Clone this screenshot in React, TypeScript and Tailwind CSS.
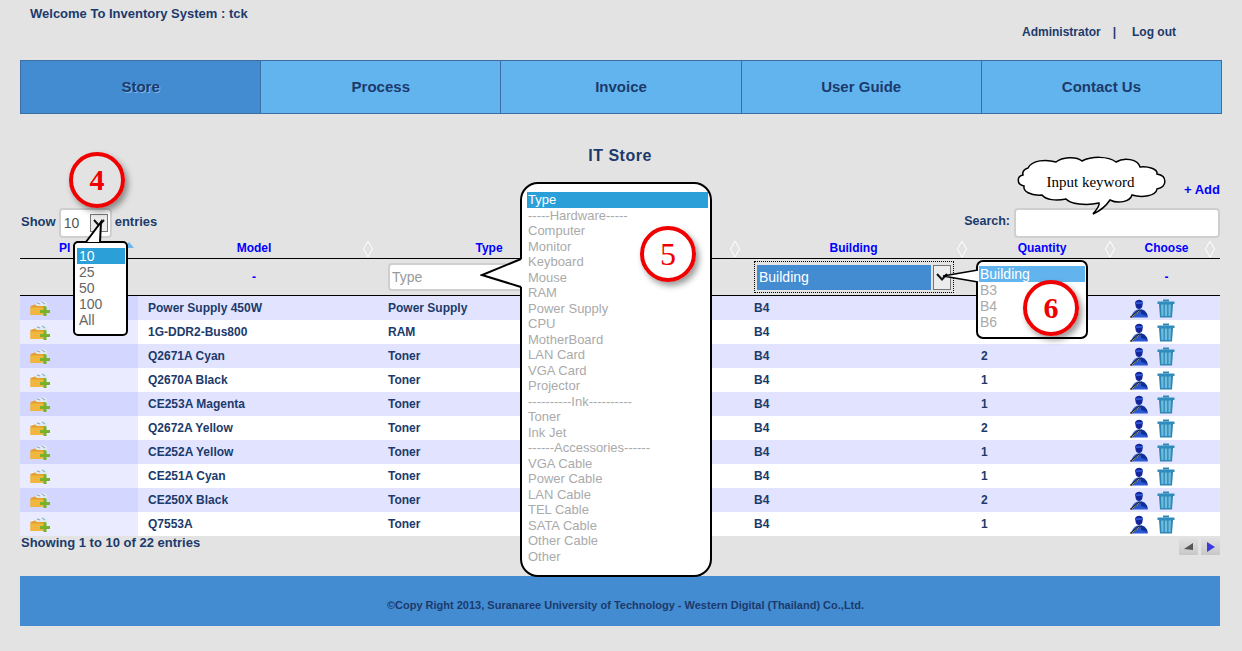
import React from "react"

const navItems = ["Store", "Process", "Invoice", "User Guide", "Contact Us"]

const rows = [
	["Power Supply 450W", "Power Supply", ""],
	["1G-DDR2-Bus800", "RAM", ""],
	["Q2671A Cyan", "Toner", "2"],
	["Q2670A Black", "Toner", "1"],
	["CE253A Magenta", "Toner", "1"],
	["Q2672A Yellow", "Toner", "2"],
	["CE252A Yellow", "Toner", "1"],
	["CE251A Cyan", "Toner", "1"],
	["CE250X Black", "Toner", "2"],
	["Q7553A", "Toner", "1"],
]

const typeOptions = [
	"Type", "-----Hardware-----", "Computer", "Monitor", "Keyboard", "Mouse", "RAM", "Power Supply", "CPU", "MotherBoard", "LAN Card", "VGA Card", "Projector",
	"----------Ink----------", "Toner", "Ink Jet", "------Accessories------", "VGA Cable", "Power Cable", "LAN Cable", "TEL Cable", "SATA Cable", "Other Cable", "Other",
]

// sort marker in the header cells
const SortBoth = ({ className }: { className: string }) => (
	<svg viewBox="0 0 12 18" className={`absolute top-[-1px] h-[18px] w-3 ${className}`} fill="none" stroke="#ffffff" strokeWidth="1">
		<path d="M6 1 L10.5 9 L6 17 L1.5 9 Z" />
	</svg>
)

const FolderPlus = () => (
	<svg viewBox="0 0 20 16" className="h-4 w-5">
		<path d="M5 5 L8 1.5 L11 2.5 L14 0.5 L17 3 L17.5 7 L5 7 Z" fill="#dfe9f2" />
		<path d="M7 3 L10 4 M12 2 L15 4" stroke="#6f8fb0" strokeWidth="0.8" />
		<path d="M0.5 6 L5 4.5 L7 6 L16 6 L16 15 L0.5 15 Z" fill="#e2a02e" />
		<path d="M0.5 7.5 L16 7.5 L16 15 L0.5 15 Z" fill="#f0b63f" />
		<path d="M13.5 6.5 H16.5 V10 H20 V13 H16.5 V16 H13.5 V13 H10 V10 H13.5 Z" fill="#76b32a" />
	</svg>
)

const UserPen = () => (
	<svg viewBox="0 0 18 19" className="h-[19px] w-[18px]">
		<path d="M5 4 C5.5 0 12.5 -0.5 13 3.5 L12.5 6 C12.5 8.5 11 10 9 10 C7 10 5.5 8.5 5.5 6 Z" fill="#12289a" />
		<path d="M5.5 3.5 L13 3 L13 4.5 L5.5 5 Z" fill="#3a5fe0" />
		<path d="M1.5 18.5 C2 14 4.5 11.5 7.5 10.5 L11.5 10.5 C15 11.5 17.5 14 18 18.5 Z" fill="#2a5ad6" />
		<path d="M10.5 10.5 L12 10.5 C15 11.5 17 14 17.5 17 L11 15 Z" fill="#12308f" />
		<path d="M0.5 18.5 L10 11" stroke="#161616" strokeWidth="1.8" />
		<path d="M1.5 18.2 L9.5 11.8" stroke="#d9d9c8" strokeWidth="0.7" />
	</svg>
)

const TrashIcon = () => (
	<svg viewBox="0 0 18 19" className="h-[19px] w-[18px]">
		<path d="M6 0.5 H12 V2.5 H6 Z" fill="#2f86b4" />
		<path d="M0.5 2.5 H17.5 V5 H0.5 Z" fill="#2f8dbd" />
		<path d="M2 5 H16 L15 18.5 H3 Z" fill="#2f86b4" />
		<path d="M4 5.5 H6.5 V17 H4.5 Z M7.8 5.5 H10.2 V17 H7.8 Z M11.5 5.5 H14 L13.5 17 H11.5 Z" fill="#6fbddf" />
	</svg>
)

const ArrowBox = ({ className }: { className: string }) => (
	<div className={`flex w-[18px] items-center justify-center border border-[#777] bg-[#ececec] ${className}`}>
		<svg viewBox="0 0 12 8" className="h-2 w-3" fill="none" stroke="#111" strokeWidth="2">
			<path d="M1 1 L6 6.5 L11 1" />
		</svg>
	</div>
)

const NumberMark = ({ n, className }: { n: string; className: string }) => (
	<div
		className={`absolute flex h-[56px] w-[56px] items-center justify-center rounded-full border-[4px] border-[#f00000] leading-none text-[#f00000] shadow-[3px_4px_6px_rgba(0,0,0,0.4)] [font-family:'Liberation_Serif',serif] ${className}`}
	>
		{n}
	</div>
)

export default function App() {
	return (
		<div className="relative h-[651px] w-[1242px] overflow-hidden bg-[#e3e3e3] text-[12px] font-bold text-[#1c3a6b] [font-family:'Liberation_Sans',Arial,sans-serif]">
			{/* top bar */}
			<div className="pl-[30px] pt-[6px] text-[13px] leading-[15px]">Welcome To Inventory System : tck</div>
			<div className="mt-[4px] flex justify-end pr-[66px] leading-[15px]">
				<span>Administrator</span>
				<span className="ml-[12px] mr-[16px]">|</span>
				<span>Log out</span>
			</div>

			{/* main nav */}
			<nav className="ml-5 mt-[20px] flex h-[54px] w-[1202px] border border-[#3a6ea5] text-[15px] shadow-[inset_0_1px_0_#9fd0f5]">
				{navItems.map((item, i) => (
					<div
						key={item}
						className={
							i === 0
								? "flex flex-1 items-center justify-center border-r border-[#3a6ea5] bg-[#438cd2] [text-shadow:1px_1px_0_#7db8ea]"
								: "flex flex-1 items-center justify-center border-r border-[#3a6ea5] bg-[#62b4ee] last:border-r-0"
						}
					>
						{item}
					</div>
				))}
			</nav>

			<main className="ml-5 w-[1200px]">
				<h1 className="mt-[33px] text-center text-[16px] leading-[18px] tracking-[0.5px]">IT Store</h1>
				<div className="mt-[17px] text-right text-[13px] leading-[15px] text-[#0000ff]">+ Add</div>

				{/* length + search */}
				<div className="mt-[11px] flex h-[30px] items-center justify-between text-[13px]">
					<div className="flex items-center pl-[1px]">
						<span className="pb-[3px]">Show</span>
						<div className="relative mx-[3px] flex h-[30px] w-[53px] items-center rounded-[4px] border-2 border-[#cfcfcf] bg-white pl-[3px] text-[14px] font-normal text-[#555]">
							10
							<ArrowBox className="absolute left-[29px] top-[4px] h-[18px]" />
						</div>
						<span className="pb-[3px]">entries</span>
					</div>
					<div className="flex items-center">
						<span className="mr-[4px] pb-[3px] text-[12.5px]">Search:</span>
						<div className="h-[30px] w-[206px] rounded-[4px] border-2 border-[#cfcfcf] bg-white" />
					</div>
				</div>

				{/* table head */}
				<div className="mt-[3px] flex h-[18px] border-b border-black leading-[15px] text-[#0000ff]">
					<div className="relative w-[118px] pl-[39px]">
						Pl
						<svg viewBox="0 0 10 6" className="absolute left-[104px] top-[1px] h-[6px] w-[10px]" fill="#6bb6ee">
							<path d="M5 0 L10 6 L0 6 Z" />
						</svg>
					</div>
					<div className="relative w-[240px] pr-[8px] text-center">
						Model
						<SortBoth className="right-[4px]" />
					</div>
					<div className="w-[222px] text-center">Type</div>
					<div className="relative w-[144px]">
						<SortBoth className="right-[3px]" />
					</div>
					<div className="relative w-[227px] pr-[8px] text-center">
						Building
						<SortBoth className="right-[3px]" />
					</div>
					<div className="relative w-[142px] text-center">
						Quantity
						<SortBoth className="right-[-3px]" />
					</div>
					<div className="relative w-[107px] text-center">
						Choose
						<SortBoth className="right-[4px]" />
					</div>
				</div>

				{/* filter row */}
				<div className="flex h-[37px] items-center border-b border-black">
					<div className="w-[118px]" />
					<div className="w-[240px] pr-[8px] text-center text-[#0000ff]">-</div>
					<div className="w-[366px] pl-[10px]">
						<div className="flex h-[28px] w-[140px] items-center rounded-[4px] border-2 border-[#cfcfcf] bg-white pl-[2px] text-[14px] font-normal text-[#999]">Type</div>
					</div>
					<div className="w-[227px] pl-[10px]">
						<div className="flex h-[32px] w-[200px] items-center gap-[2px] border border-dotted border-black p-[2px]">
							<div className="flex h-[25px] w-[176px] items-center bg-[#438cd2] pl-[2px] text-[14px] font-normal text-white">Building</div>
							<ArrowBox className="h-[25px]" />
						</div>
					</div>
					<div className="w-[142px]" />
					<div className="w-[107px] text-center text-[#0000ff]">-</div>
				</div>

				{/* rows */}
				<div>
					{rows.map((row, i) => (
						<div key={row[0]} className={`flex h-6 items-center ${i % 2 === 0 ? "bg-[#e2e4ff]" : "bg-white"}`}>
							<div className={`flex h-6 w-[118px] items-center pl-[10px] ${i % 2 === 0 ? "bg-[#d3d6ff]" : "bg-[#eaebff]"}`}>
								<FolderPlus />
							</div>
							<div className="w-[240px] pl-[10px]">{row[0]}</div>
							<div className="w-[366px] pl-[10px]">{row[1]}</div>
							<div className="w-[227px] pl-[10px]">B4</div>
							<div className="w-[142px] pl-[10px]">{row[2]}</div>
							<div className="flex w-[107px] items-center justify-center gap-[9px] pr-[28px]">
								<UserPen />
								<TrashIcon />
							</div>
						</div>
					))}
				</div>

				{/* table footer */}
				<div className="flex h-[24px] items-start justify-between">
					<span className="-mt-[1px] pl-[1px] text-[13px] leading-[15px]">Showing 1 to 10 of 22 entries</span>
					<div className="mt-[2px] flex gap-[3px]">
						<div className="flex h-[17px] w-[19px] items-center justify-center bg-gradient-to-b from-[#e0e0e0] to-[#c8c8c8]">
							<svg viewBox="0 0 10 8" className="h-2 w-[10px]" fill="#555"><path d="M0 6 L9 0 L9 7 Z" /></svg>
						</div>
						<div className="flex h-[17px] w-[19px] items-center justify-center bg-gradient-to-b from-[#e0e0e0] to-[#c8c8c8]">
							<svg viewBox="0 0 10 10" className="h-[10px] w-[10px]" fill="#3a3ae0"><path d="M1 0 L9 5 L1 10 Z" /></svg>
						</div>
					</div>
				</div>

				<footer className="mt-[16px] flex h-[50px] items-center justify-center bg-[#438cd2] pl-[11px] pt-[9px] text-[11px]">
					©Copy Right 2013, Suranaree University of Technology - Western Digital (Thailand) Co.,Ltd.
				</footer>
			</main>

			{/* annotation: cloud */}
			<div className="absolute left-[1016px] top-[156px] h-[62px] w-[152px]">
				<svg viewBox="0 0 152 62" className="absolute inset-0 h-full w-full" fill="#ffffff" stroke="#000000" strokeWidth="1.5">
					<path d="M12 12 C16 4 30 3 40 6 C46 1 60 0 66 5 C76 0 92 0 100 6 C108 1 122 3 124 11 C132 10 142 13 141 18 C152 20 151 31 141 33 C140 40 126 42 116 39 C114 46 102 48 94 44 C90 50 86 54 77 58 C81 53 84 50 83 47 C70 50 54 48 50 43 C40 45 30 44 26 39 C14 40 7 35 8 30 C0 28 1 20 7 19 C6 16 8 13 12 12 Z" />
				</svg>
				<div className="absolute inset-x-0 top-[17px] pr-[3px] text-center text-[15px] font-normal leading-[18px] text-black [font-family:'Liberation_Serif',serif]">Input keyword</div>
			</div>

			{/* annotation 4: page length */}
			<div className="absolute left-[73px] top-[241px] h-[95px] w-[55px] rounded-[5px] border-2 border-black bg-white pl-[2px] pr-[1px] pt-[5px] text-[14px] font-normal leading-[16px] text-[#666]">
				<div className="bg-[#2a9fd8] pl-[2px] text-white">10</div>
				<div className="pl-[2px]">25</div>
				<div className="pl-[2px]">50</div>
				<div className="pl-[2px]">100</div>
				<div className="pl-[2px]">All</div>
			</div>
			<svg viewBox="0 0 30 30" className="absolute left-[80px] top-[219px] h-[30px] w-[30px]">
				<path d="M6 23 L21 3 L20 23 Z" fill="#ffffff" />
				<path d="M6 23 L21 3 L20 23" fill="none" stroke="#000" strokeWidth="2" />
			</svg>
			<NumberMark n="4" className="left-[69px] top-[152px] text-[30px] font-bold" />

			{/* annotation 5: type filter */}
			<div className="absolute left-[520px] top-[182px] h-[395px] w-[192px] rounded-[18px] border-2 border-black bg-white pl-[5px] pr-[2px] pt-[8px] text-[13px] font-normal leading-[15.5px] text-[#aaa]">
				{typeOptions.map((opt, i) => (
					<div key={opt + i} className={i === 0 ? "bg-[#2a9fd8] pl-[1px] text-white" : "pl-[1px]"}>
						{opt}
					</div>
				))}
			</div>
			<svg viewBox="0 0 44 32" className="absolute left-[480px] top-[258px] h-8 w-[44px]">
				<path d="M42 1 L2 17 L42 29 Z" fill="#ffffff" />
				<path d="M41 1 L2 17 L41 29" fill="none" stroke="#000" strokeWidth="2" />
			</svg>
			<NumberMark n="5" className="left-[640px] top-[226px] text-[32px] font-normal" />

			{/* annotation 6: building filter */}
			<div className="absolute left-[976px] top-[260px] h-[79px] w-[112px] rounded-[7px] border-2 border-black bg-white px-[1px] pt-[4px] text-[14px] font-normal leading-[16px] text-[#aaa]">
				<div className="bg-[#62b4ee] pl-[1px] text-white">Building</div>
				<div className="pl-[1px]">B3</div>
				<div className="pl-[1px]">B4</div>
				<div className="pl-[1px]">B6</div>
			</div>
			<svg viewBox="0 0 38 16" className="absolute left-[941px] top-[268px] h-4 w-[38px]">
				<path d="M37 2 L2 8 L37 14 Z" fill="#ffffff" />
				<path d="M37 2 L2 8 L37 14" fill="none" stroke="#000" strokeWidth="1.6" />
			</svg>
			<NumberMark n="6" className="left-[1023px] top-[280px] text-[30px] font-bold" />
		</div>
	)
}
